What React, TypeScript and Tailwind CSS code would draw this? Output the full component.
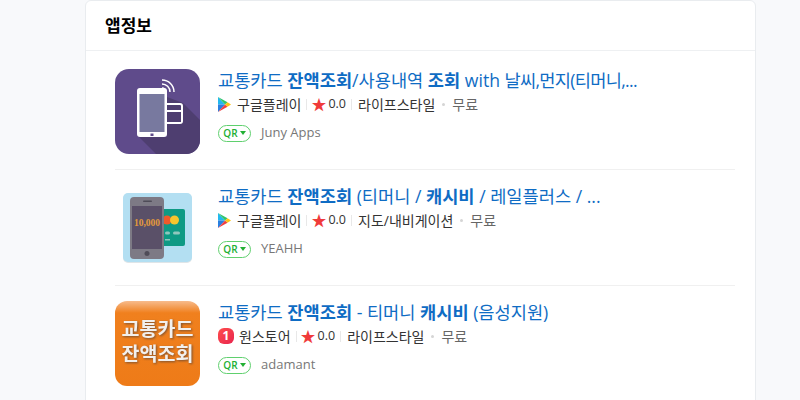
const KR = 'font-["Open_Sans","Noto_Sans_CJK_KR",sans-serif]';

function PlayIcon() {
  return (
    <svg width="13" height="15" viewBox="0 0 13 15" className="shrink-0">
      <path d="M0 0V7.500H7Z" fill="#22b8f0" />
      <path d="M0 15V7.500H7Z" fill="#2a7fe0" />
      <path d="M0 0L9.500 5.200L7 7.500Z" fill="#2fc46e" />
      <path d="M0 15L9.500 9.800L7 7.500Z" fill="#ef3e42" />
      <path d="M9.500 5.200L13 7.500L9.500 9.800L7 7.500Z" fill="#fdc414" />
    </svg>
  );
}

function OneStoreIcon() {
  return (
    <span className="flex h-4 w-4 shrink-0 items-center justify-center rounded-[6px] bg-gradient-to-br from-[#ff4b4b] to-[#e8244f] text-[12px] font-bold leading-none text-white">
      1
    </span>
  );
}

function PurpleIcon() {
  return (
    <svg width="85" height="85" viewBox="0 0 85 85" className="rounded-[14px]">
      <rect width="85" height="85" fill="#5f4b8b" />
      <path d="M24 68L41 85H85V51L68 34L52 28V68Z" fill="#4e3e70" />
      <rect x="22" y="19" width="30" height="49" rx="3" fill="#fff" />
      <rect x="24.500" y="25" width="25" height="38" fill="#78799f" />
      <rect x="35.500" y="64.500" width="3" height="2.500" fill="#5f4b8b" />
      <path d="M52 34H65Q68 34 68 37V52Q68 55 65 55H52V53H66V43H52V41H66V37Q66 36 65 36H52Z" fill="#fff" />
      <path d="M47 11A12 12 0 0 1 59 23M47 15A8 8 0 0 1 55 23M47 19A4 4 0 0 1 51 23" fill="none" stroke="#fff" strokeWidth="1.500" />
    </svg>
  );
}

function PhoneIcon() {
  return (
    <svg width="85" height="85" viewBox="0 0 85 85">
      <rect x="8" y="9" width="69" height="69" rx="5" fill="#dfe5e8" />
      <rect x="8" y="8" width="69" height="69" rx="5" fill="#b3dff2" />
      <rect x="44" y="24" width="26" height="37" rx="2" fill="#0e9a84" />
      <circle cx="52" cy="35" r="4.500" fill="#f0592a" />
      <circle cx="59.500" cy="35" r="4.500" fill="#f6c52d" />
      <rect x="50" y="46.500" width="5" height="3" rx="1.500" fill="#8fc7bd" />
      <rect x="58" y="46.500" width="7" height="3" rx="1.500" fill="#8fc7bd" />
      <rect x="50" y="54" width="5" height="1.500" fill="#8fc7bd" />
      <rect x="15" y="12" width="34" height="62" rx="4" fill="#7d7a85" />
      <rect x="17" y="21" width="30" height="43" fill="#5a5068" />
      <rect x="28" y="15.500" width="9" height="1.500" rx="0.750" fill="#4f4c58" />
      <circle cx="32" cy="68.500" r="2.500" fill="#4f4c58" />
      <text x="32" y="40.500" textAnchor="middle" fontFamily="Liberation Serif, serif" fontSize="9.500" fontWeight="700" fill="#e39a3b">10,000</text>
    </svg>
  );
}

function OrangeIcon() {
  return (
    <svg width="85" height="85" viewBox="0 0 85 85" className="rounded-[12px]">
      <defs>
        <linearGradient id="orange" x1="0" y1="0" x2="0" y2="1">
          <stop offset="0" stopColor="#f7bb8c" />
          <stop offset="0.14" stopColor="#f0801e" />
          <stop offset="1" stopColor="#ee7b18" />
        </linearGradient>
      </defs>
      <rect width="85" height="85" fill="url(#orange)" />
      <g fontFamily="Noto Sans CJK KR, sans-serif" fontSize="19.500" fontWeight="700" textAnchor="middle" fill="#f2f0ee" className="drop-shadow-[1px_1px_1px_#7a5030]">
        <text x="42.500" y="35">교통카드</text>
        <text x="42.500" y="60">잔액조회</text>
      </g>
    </svg>
  );
}

function Row({ icon, title, store, category, author, last }: { icon: React.ReactNode; title: React.ReactNode; store: 'google' | 'one'; category: string; author: string; last?: boolean }) {
  return (
    <li className={`flex h-[116px] pt-[15px] ${last ? '' : 'border-b border-[#f0f0f0]'}`}>
      <div className="h-[85px] w-[85px] shrink-0">{icon}</div>
      <div className="ml-[18px] min-w-0 flex-1">
        <div className="-mt-[1px] h-[24px] text-[17.600px] leading-[24px] text-[#0f6cc4]">{title}</div>
        <div className="flex h-[24px] items-center text-[14px] text-[#333]">
          {store === 'google' ? <PlayIcon /> : <OneStoreIcon />}
          <span className={store === 'google' ? 'ml-[6px]' : 'ml-[5px]'}>{store === 'google' ? '구글플레이' : '원스토어'}</span>
          <span className="ml-[5px] mr-[4px] h-[11px] w-px bg-[#e8e8e8]" />
          <span className="text-[15px] leading-none text-[#f03a3a]">★</span>
          <span className="ml-[2px] mt-[1px] text-[12.500px]">0.0</span>
          <span className="ml-[5px] mr-[6px] h-[11px] w-px bg-[#e8e8e8]" />
          <span>{category}</span>
          <span className="mx-[7px] h-[3px] w-[3px] rounded-full bg-[#d5d5d5]" />
          <span className="text-[#666]">무료</span>
        </div>
        <div className="mt-[5px] flex h-[24px] items-center">
          <span className="flex h-[17px] w-[33px] items-center justify-center gap-[2px] rounded-full border border-[#5fd06e] text-[10px] font-semibold text-[#22b033]">
            QR
            <svg width="6" height="4" viewBox="0 0 6 4"><path d="M0 0H6L3 4Z" fill="#22b033" /></svg>
          </span>
          <span className="ml-[10px] text-[13px] text-[#777]">{author}</span>
        </div>
      </div>
    </li>
  );
}

export default function App() {
  return (
    <div className={`h-[400px] w-[800px] overflow-hidden bg-[#f8f9fb] pl-[85px] pr-[44px] ${KR}`}>
      <div className="h-[420px] rounded-t-[6px] border border-[#e9ecef] bg-white">
        <h2 className="flex h-[50px] items-center border-b border-[#eef0f2] pl-[19px] text-[17px] font-bold text-black">앱정보</h2>
        <ul className="ml-[29px] mr-[20px] pt-[3px]">
          <Row
            icon={<PurpleIcon />}
            title={<>교통카드 <b>잔액조회</b>/사용내역 <b>조회</b> with <span className="tracking-[-0.7px]">날씨,먼지(티머니,...</span></>}
            store="google"
            category="라이프스타일"
            author="Juny Apps"
          />
          <Row
            icon={<PhoneIcon />}
            title={<>교통카드 <b>잔액조회</b> (티머니 / <b>캐시비</b> / 레일플러스 / ...</>}
            store="google"
            category="지도/내비게이션"
            author="YEAHH"
          />
          <Row
            icon={<OrangeIcon />}
            title={<>교통카드 <b>잔액조회</b> - 티머니 <b>캐시비</b> (음성지원)</>}
            store="one"
            category="라이프스타일"
            author="adamant"
            last
          />
        </ul>
      </div>
    </div>
  );
}
